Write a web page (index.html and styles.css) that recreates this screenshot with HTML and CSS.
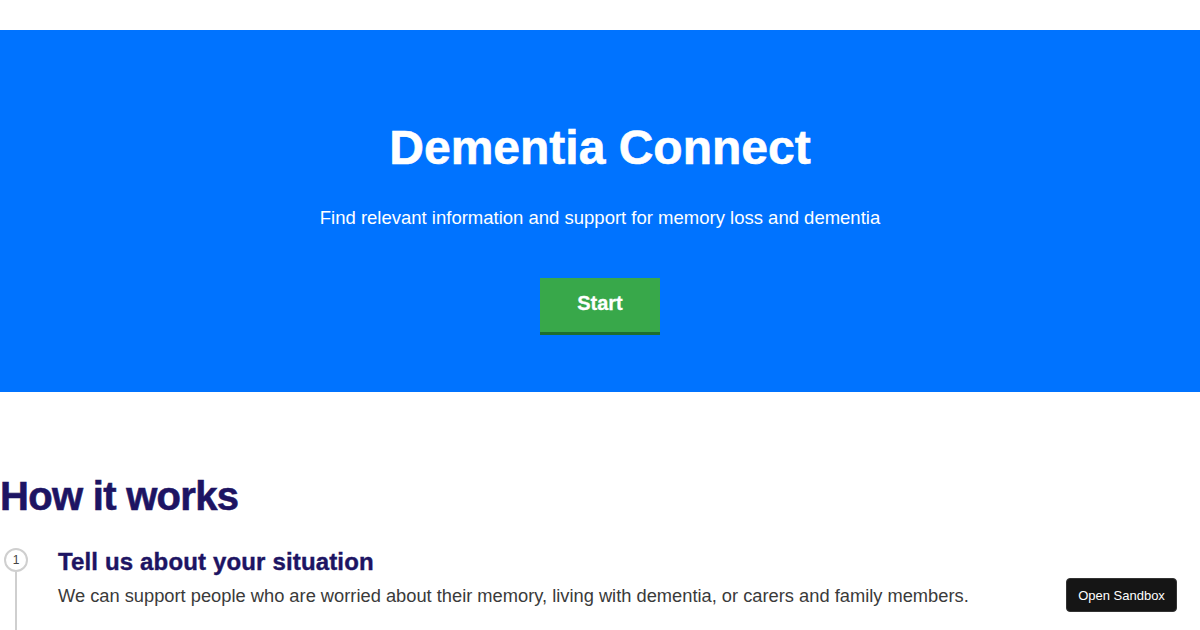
FILE: index.html
```html
<!DOCTYPE html>
<html lang="en">
<head>
<meta charset="utf-8">
<title>Dementia Connect</title>
<link rel="stylesheet" href="styles.css">
</head>
<body>
<div class="topbar"></div>
<section class="hero">
  <h1 class="hero-title">Dementia Connect</h1>
  <p class="hero-sub">Find relevant information and support for memory loss and dementia</p>
  <a class="start-btn" href="#">Start</a>
</section>
<section class="how">
  <h2 class="how-title">How it works</h2>
  <ol class="steps">
    <li class="step">
      <div class="step-marker">
        <span class="step-num">1</span>
        <span class="step-line"></span>
      </div>
      <div class="step-body">
        <h3 class="step-title">Tell us about your situation</h3>
        <p class="step-text">We can support people who are worried about their memory, living with dementia, or carers and family members.</p>
      </div>
    </li>
  </ol>
</section>
<a class="sandbox-btn" href="#">Open Sandbox</a>
</body>
</html>
```

FILE: styles.css
```css
* { box-sizing: border-box; }
html, body { margin: 0; padding: 0; }
body {
  font-family: "Liberation Sans", Arial, sans-serif;
  background: #fff;
  color: #333;
  width: 1200px;
  height: 630px;
  overflow: hidden;
}
.topbar { height: 30px; background: #fff; }
.hero {
  background: #0073ff;
  height: 362px;
  display: flex;
  flex-direction: column;
  align-items: center;
  padding-top: 90px;
}
.hero-title {
  margin: 0;
  color: #fff;
  font-size: 48px;
  line-height: 56px;
  font-weight: 700;
  -webkit-text-stroke: 0.6px #fff;
}
.hero-sub {
  margin: 31px 0 0;
  color: #fff;
  font-size: 18.5px;
  line-height: 22px;
}
.start-btn {
  margin-top: 49px;
  width: 120px;
  height: 57px;
  background: #38a84a;
  border-bottom: 3px solid #1e6e2e;
  color: #fff;
  font-weight: 700;
  font-size: 20px;
  text-decoration: none;
  display: flex;
  align-items: center;
  justify-content: center;
  padding-bottom: 4px;
  -webkit-text-stroke: 0.3px #fff;
}
.how { padding-top: 80px; }
.how-title {
  margin: 0;
  color: #1d1463;
  font-size: 40px;
  line-height: 48px;
  font-weight: 700;
  letter-spacing: -0.7px;
  -webkit-text-stroke: 0.6px #1d1463;
}
.steps { list-style: none; margin: 28px 0 0; padding: 0; }
.step { display: flex; }
.step-marker {
  width: 58px;
  display: flex;
  flex-direction: column;
  align-items: flex-start;
  padding-left: 4px;
}
.step-num {
  width: 24px;
  height: 24px;
  border: 2px solid #cfcfcf;
  border-radius: 50%;
  font-size: 12px;
  line-height: 20px;
  text-align: center;
  color: #444;
}
.step-line {
  width: 2px;
  height: 80px;
  background: #cfcfcf;
  margin-left: 11px;
}
.step-title {
  margin: 0;
  color: #1d1463;
  font-size: 24px;
  line-height: 28px;
  font-weight: 700;
  letter-spacing: 0.15px;
  -webkit-text-stroke: 0.4px #1d1463;
}
.step-text {
  margin: 8px 0 0;
  font-size: 18.3px;
  line-height: 24px;
  color: #3a3a3a;
}
.sandbox-btn {
  position: fixed;
  left: 1066px;
  top: 578px;
  width: 111px;
  height: 34px;
  background: #151515;
  border-radius: 4px;
  color: #fff;
  font-family: "Liberation Sans", Arial, sans-serif;
  font-size: 13px;
  text-decoration: none;
  display: flex;
  align-items: center;
  justify-content: center;
  border: 1px solid #333;
}
```
